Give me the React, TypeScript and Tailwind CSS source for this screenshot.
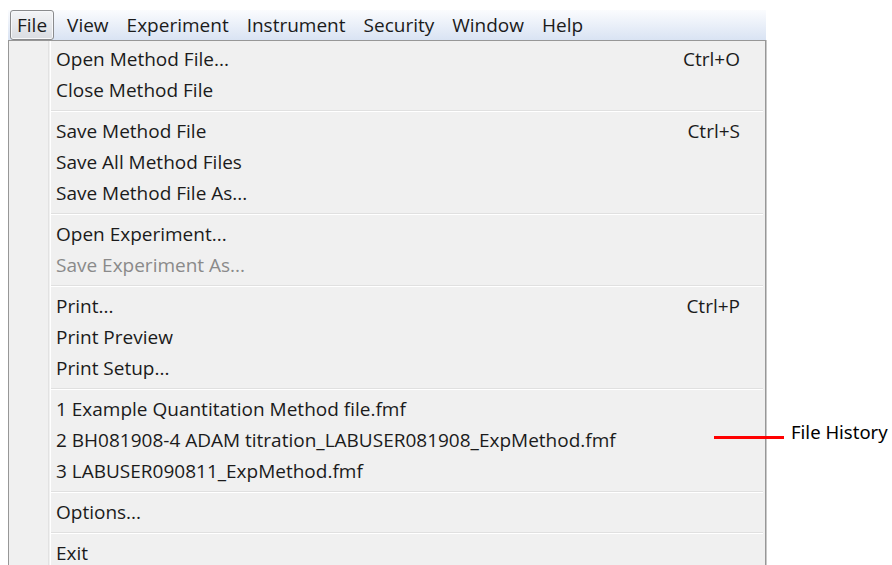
import React from "react";

type Entry =
  | { kind: "item"; label: string; shortcut?: string; disabled?: boolean }
  | { kind: "sep" };

const menuBar = ["File", "View", "Experiment", "Instrument", "Security", "Window", "Help"];

const entries: Entry[] = [
  { kind: "item", label: "Open Method File...", shortcut: "Ctrl+O" },
  { kind: "item", label: "Close Method File" },
  { kind: "sep" },
  { kind: "item", label: "Save Method File", shortcut: "Ctrl+S" },
  { kind: "item", label: "Save All Method Files" },
  { kind: "item", label: "Save Method File As..." },
  { kind: "sep" },
  { kind: "item", label: "Open Experiment..." },
  { kind: "item", label: "Save Experiment As...", disabled: true },
  { kind: "sep" },
  { kind: "item", label: "Print...", shortcut: "Ctrl+P" },
  { kind: "item", label: "Print Preview" },
  { kind: "item", label: "Print Setup..." },
  { kind: "sep" },
  { kind: "item", label: "1 Example Quantitation Method file.fmf" },
  { kind: "item", label: "2 BH081908-4 ADAM titration_LABUSER081908_ExpMethod.fmf" },
  { kind: "item", label: "3 LABUSER090811_ExpMethod.fmf" },
  { kind: "sep" },
  { kind: "item", label: "Options..." },
  { kind: "sep" },
  { kind: "item", label: "Exit" },
];

export default function App() {
  return (
    <div className="relative w-[892px] h-[565px] bg-white overflow-hidden pl-[8px] pt-[10px] font-['Open_Sans',sans-serif] text-[19px] text-[#1b1b1b]">
      <div className="w-[758px] flex flex-col">
        {/* Menu bar */}
        <div className="h-[30px] flex items-center bg-gradient-to-b from-[#fbfcfe] to-[#d9e3f3]">
          {menuBar.map((m, i) =>
            i === 0 ? (
              <div
                key={m}
                className="ml-[2px] h-[30px] px-[6px] flex items-center rounded-[3px] border border-[#8a8b8d] bg-gradient-to-b from-[#f3f4f6] to-[#dadde2] shadow-[inset_0_0_0_1px_#f7f8fa]"
              >
                {m}
              </div>
            ) : (
              <div key={m} className={`h-[30px] px-[9px] flex items-center ${i === 1 ? "ml-[4px]" : ""}`}>
                {m}
              </div>
            )
          )}
        </div>

        {/* Drop-down */}
        <div className="relative h-[530px] bg-[#f0f0f0] border-t border-l border-r border-[#979797] shadow-[1px_0_0_#c9c9c9] pt-[3px]">
          {/* icon gutter */}
          <div className="absolute top-0 bottom-0 left-[39px] w-[2px] border-l border-[#e2e2e2] shadow-[1px_0_0_#ffffff]" />
          {entries.map((e, i) =>
            e.kind === "sep" ? (
              <div key={i} className="h-[10px] pt-[4px] pl-[41px] pr-[2px]">
                <div className="h-[2px] border-t border-[#e0e0e0] bg-white" />
              </div>
            ) : (
              <div
                key={i}
                className={`h-[31px] flex items-center pl-[47px] pr-[25px] ${e.disabled ? "text-[#8a8a8a]" : ""}`}
              >
                <span className="flex-1 whitespace-nowrap">{e.label}</span>
                {e.shortcut && <span>{e.shortcut}</span>}
              </div>
            )
          )}
        </div>
      </div>

      {/* Callout */}
      <div className="absolute left-[714px] top-[436px] w-[70px] h-[3px] bg-[#ff0000]" />
      <div className="absolute left-[791px] top-[419px] text-[18.5px] leading-[26px] text-black font-['Noto_Sans',sans-serif]">
        File History
      </div>
    </div>
  );
}
